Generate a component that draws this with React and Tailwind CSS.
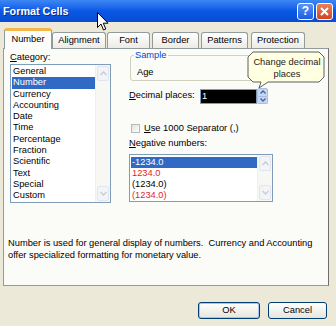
import React from "react";

const font = { fontFamily: '"Liberation Sans", Arial, sans-serif' };

function Scrollbar({ rows }) {
  return (
    <div className="w-[15px] flex flex-col justify-between bg-[#F7F7F3] border-l border-[#F0F0EC]">
      <div className="h-[15px] m-[1px] rounded-[2px] bg-[#F2F4F8] border border-[#E1E6EE] flex items-center justify-center">
        <svg width="7" height="5" viewBox="0 0 7 5">
          <path d="M0.5 4 L3.5 1 L6.5 4" fill="none" stroke="#C9CED6" strokeWidth="1.5" />
        </svg>
      </div>
      <div className="h-[15px] m-[1px] rounded-[2px] bg-[#F2F4F8] border border-[#E1E6EE] flex items-center justify-center">
        <svg width="7" height="5" viewBox="0 0 7 5">
          <path d="M0.5 1 L3.5 4 L6.5 1" fill="none" stroke="#C9CED6" strokeWidth="1.5" />
        </svg>
      </div>
    </div>
  );
}

const categories = [
  "General",
  "Number",
  "Currency",
  "Accounting",
  "Date",
  "Time",
  "Percentage",
  "Fraction",
  "Scientific",
  "Text",
  "Special",
  "Custom",
];

const negatives = [
  { t: "-1234.0", sel: true },
  { t: "1234.0", red: true },
  { t: "(1234.0)" },
  { t: "(1234.0)", red: true },
];

const tabs = [
  { label: "Number", w: "w-[48px]", ml: "ml-0", active: true },
  { label: "Alignment", w: "w-[54px]", ml: "ml-0" },
  { label: "Font", w: "w-[43px]", ml: "ml-[1px]" },
  { label: "Border", w: "w-[47px]", ml: "ml-[2px]" },
  { label: "Patterns", w: "w-[47px]", ml: "ml-[2px]" },
  { label: "Protection", w: "w-[54px]", ml: "ml-[3px]" },
];

export default function App() {
  return (
    <div
      className="relative w-[336px] h-[326px] bg-[#ECE9D8] flex flex-col overflow-hidden text-[9.3px] text-black"
      style={font}
    >
      {/* title bar */}
      <div className="h-[22px] bg-gradient-to-b from-[#3D87F4] via-[#0858E6] to-[#0A4CD2] flex items-center justify-between pl-[3px] pr-[3px]">
        <span className="text-white font-bold text-[10.8px] [text-shadow:1px_1px_0_#0A2A8A]">
          Format Cells
        </span>
        <div className="flex gap-[2px]">
          <div className="w-[17px] h-[17px] rounded-[3px] border border-white bg-gradient-to-b from-[#5A94F5] to-[#1B5CE0] flex items-center justify-center text-white font-bold text-[12px] leading-none">
            ?
          </div>
          <div className="w-[17px] h-[17px] rounded-[3px] border border-white bg-gradient-to-b from-[#E8805C] to-[#D2431C] flex items-center justify-center">
            <svg width="9" height="9" viewBox="0 0 9 9">
              <path d="M1 1 L8 8 M8 1 L1 8" stroke="white" strokeWidth="2" />
            </svg>
          </div>
        </div>
      </div>

      {/* tabs */}
      <div className="mt-[6px] h-[20px] pl-[4px] flex items-end">
        {tabs.map((t) =>
          t.active ? (
            <div
              key={t.label}
              className={`${t.w} ${t.ml} h-[21px] -mb-[1px] relative z-10 rounded-t-[3px] border border-b-0 border-[#919B9C] border-t-[3px] border-t-[#F3B648] bg-[#FCFCFB] flex items-center justify-center`}
            >
              {t.label}
            </div>
          ) : (
            <div
              key={t.label}
              className={`${t.w} ${t.ml} h-[16px] rounded-t-[3px] border border-b-0 border-[#919B9C] bg-gradient-to-b from-white to-[#ECEBE5] flex items-center justify-center`}
            >
              {t.label}
            </div>
          )
        )}
      </div>

      {/* panel */}
      <div className="ml-[3px] w-[326px] h-[238px] border border-[#919B9C] border-r-[#6E6E6E] bg-[#FBFBF8] flex flex-col">
        <div className="flex pl-[6px]">
          {/* category */}
          <div className="w-[101px] mt-[2px]">
            <div className="leading-[12px]">
              <span className="underline">C</span>ategory:
            </div>
            <div className="mt-[1px] h-[139px] border border-[#7F9DB9] bg-white flex">
              <div className="flex-1 pt-[1px] pl-[1px]">
                {categories.map((c) => (
                  <div
                    key={c}
                    className={`h-[11.3px] leading-[11.3px] pl-[1px] ${
                      c === "Number" ? "bg-[#316AC5] text-white" : ""
                    }`}
                  >
                    {c}
                  </div>
                ))}
              </div>
              <Scrollbar />
            </div>
          </div>

          {/* right side */}
          <div className="ml-[18px] w-[144px] flex flex-col">
            <fieldset className="mt-[1px] w-[143px] ml-[1px] border border-[#D0D0BF] rounded-[3px] pl-[6px] pb-[2px]">
              <legend className="text-[#0046D5] leading-[11px] px-[1px] -ml-[3px]">
                Sample
              </legend>
              <div className="leading-[12px] pt-[5px]">Age</div>
            </fieldset>

            <div className="mt-[7px] h-[16px] flex items-center">
              <span className="w-[71px]">
                <span className="underline">D</span>ecimal places:
              </span>
              <div className="w-[57px] h-[15px] bg-black border border-[#7F9DB9] text-white leading-[13px] pl-[1px]">
                1
              </div>
              <div className="w-[11px] h-[16px] flex flex-col">
                <div className="flex-1 bg-[#C6D6F7] border border-[#A9BCE6] rounded-t-[2px] flex items-center justify-center">
                  <svg width="6" height="4" viewBox="0 0 6 4">
                    <path d="M0.5 3.5 L3 1 L5.5 3.5" fill="none" stroke="#4D6185" strokeWidth="1.3" />
                  </svg>
                </div>
                <div className="flex-1 bg-[#C6D6F7] border border-[#A9BCE6] border-t-0 rounded-b-[2px] flex items-center justify-center">
                  <svg width="6" height="4" viewBox="0 0 6 4">
                    <path d="M0.5 0.5 L3 3 L5.5 0.5" fill="none" stroke="#4D6185" strokeWidth="1.3" />
                  </svg>
                </div>
              </div>
            </div>

            <div className="mt-[18px] h-[12px] flex items-center gap-[4px] ml-[2px]">
              <div className="w-[9px] h-[9px] border border-[#B5B9BE] bg-gradient-to-br from-[#E0E0DB] to-white" />
              <span className="leading-[12px]">
                <span className="underline">U</span>se 1000 Separator (,)
              </span>
            </div>

            <div className="mt-[3px] leading-[12px]">
              <span className="underline">N</span>egative numbers:
            </div>

            <div className="mt-[5px] h-[48px] w-[144px] border border-[#7F9DB9] bg-white flex">
              <div className="flex-1 pt-[1.5px] pl-[1px]">
                {negatives.map((n, i) => (
                  <div
                    key={i}
                    className={`h-[11px] leading-[11px] pl-[1px] ${
                      n.sel ? "bg-[#316AC5] text-white" : n.red ? "text-[#E0262B]" : ""
                    }`}
                  >
                    {n.t}
                  </div>
                ))}
              </div>
              <Scrollbar />
            </div>
          </div>
        </div>

        <div className="mt-[34px] pl-[4px] leading-[12px]">
          Number is used for general display of numbers.&nbsp; Currency and Accounting
          <br />
          offer specialized formatting for monetary value.
        </div>
      </div>

      {/* buttons */}
      <div className="mt-[16px] flex justify-end gap-[8px] pr-[9px]">
        <button className="w-[62px] h-[17px] rounded-[3px] border border-[#003C74] bg-gradient-to-b from-white to-[#E6E5DD] shadow-[inset_0_0_0_1px_#A9C4EF] leading-none">
          OK
        </button>
        <button className="w-[59px] h-[17px] rounded-[3px] border border-[#003C74] bg-gradient-to-b from-white to-[#E6E5DD] leading-none">
          Cancel
        </button>
      </div>

      {/* tooltip callout */}
      <div className="absolute left-[246px] top-[50px] w-[82px] h-[40px]">
        <svg className="absolute inset-0" width="82" height="40" viewBox="0 0 82 40">
          <path
            d="M7 2 H73 L78 7 V27 L73 32 H22 L13 38 L15 32 H7 L2 27 V7 Z"
            fill="#FFFFE1"
            stroke="#5E5E5E"
            strokeWidth="1"
          />
        </svg>
        <div className="relative pt-[6px] text-center leading-[12px] text-[#222]">
          Change decimal
          <br />
          places
        </div>
      </div>

      {/* mouse cursor */}
      <svg
        className="absolute left-[97px] top-[12px]"
        width="12"
        height="19"
        viewBox="0 0 12 19"
      >
        <path
          d="M0.5 0.5 V15.5 L4 12 L6.5 18 L8.8 17 L6.3 11.2 H11 Z"
          fill="white"
          stroke="black"
          strokeWidth="1"
        />
      </svg>
    </div>
  );
}
